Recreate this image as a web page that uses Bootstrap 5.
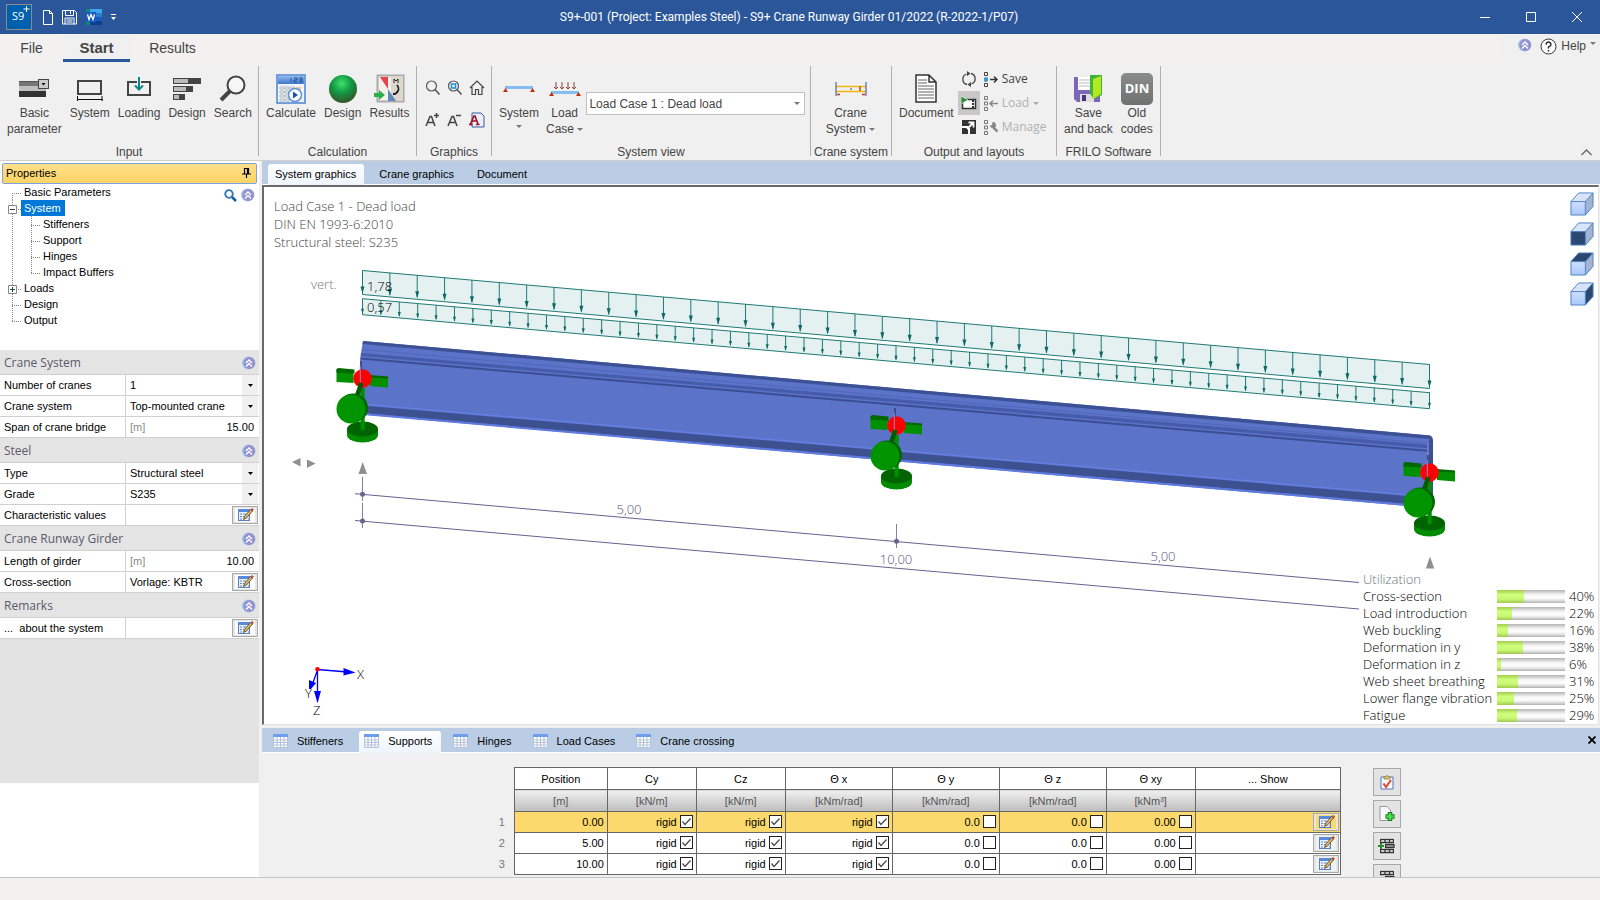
<!DOCTYPE html>
<html lang="en">
<head>
<meta charset="utf-8">
<meta name="viewport" content="width=device-width, initial-scale=1">
<title>S9+ Crane Runway Girder</title>
<link href="https://cdn.jsdelivr.net/npm/bootstrap@5.3.0/dist/css/bootstrap.min.css" rel="stylesheet">
<style>
:root{--strip:#bbcde5;--face:#f0f0f0;--line:#d0d0d0}
body{font:11px/16px "Liberation Sans",Arial,sans-serif;color:#000;background:var(--face)}
button,input,select{font:inherit;color:inherit}
button{background:none;border:0;padding:0}
svg{display:block;flex:none}
.seg{font-family:"Open Sans","Noto Sans",sans-serif}
.titlebar{height:34px;background:#2b579a;color:#fff;font-size:12px}
.wintitle{font-family:Roboto,"Open Sans",sans-serif;padding-bottom:1px}
.winbtn{width:46px;height:34px}
.menurow{height:28px;background:#f3f1f0;font-size:14px;color:#444}
.menurow a{color:#444;text-decoration:none;line-height:28px;height:28px;text-align:center;border-bottom:3px solid transparent}
.m-file{width:63px}.m-start{width:67px;font-weight:bold;font-size:15px;background:var(--face);border-bottom-color:#2b579a!important}.m-res{width:85px}
.helpbox{font-size:12px;background:var(--face);height:28px}
.ribbon{height:99px;border-bottom:1px solid #d0cfcc;font-size:12px;color:#444}
.rgroup{border-right:1px solid #b0b0b0;margin:4px 0;height:90px;padding-left:3px}
.rgroup .gname{line-height:20px;height:14px;text-align:center;margin-left:-3px}
.g1{width:259px}.g2{width:158px}.g3{width:75px}.g4{width:319px}.g5{width:81px}.g6{width:165px}.g7{width:104px}
.rbtn{padding:0 4px;text-align:center;line-height:16px;white-space:nowrap}
.g4 .rbtn{padding:0 3px 0 4px}
.rbtn .ic{height:33px;margin-top:6px;display:flex;align-items:center;justify-content:center}
.tool3{display:grid;grid-template-columns:22px 22px 22px;grid-template-rows:32px 32px;place-items:center;margin:6px 0 0 2px;width:66px}
.tool3 button{width:20px;height:20px}
.combo{width:219px;height:23px;margin-top:26px;border:1px solid #c0c0c0;background:#fff url("data:image/svg+xml,%3Csvg xmlns='http://www.w3.org/2000/svg' width='6' height='3'%3E%3Cpath d='M0 0h6l-3 3z' fill='%23777'/%3E%3C/svg%3E") no-repeat right 4px center;appearance:none;border-radius:0;padding:0 2px}
.lay,.lay1{margin-top:1px}
.lay button{height:24px;gap:4px}
.lay .off{color:#b0b0b0}
.lay1 button{width:22px;height:24px;display:flex;align-items:center;justify-content:center}
.lay1 .on{background:#c9c8c6}
.left{width:262px}
.left-in{width:259px;background:#fff}
.ptitle{margin:2px 0 0 2px;height:21px;width:255px;border:1px solid #7ba4de;background:linear-gradient(#ffe08a,#fdd466);border-radius:2px;padding:0 5px 2px 3px}
.treebox{height:166px}
.trow{height:16px;padding-left:12px;display:flex}
.trow a{color:#000;text-decoration:none;padding:0 3px}
.trow a.sel{background:#0078d7;color:#fff;padding-right:4px}
.tw{width:9px;height:16px;display:block;--d:repeating-linear-gradient(#888 0 1px,transparent 1px 2px);--h:repeating-linear-gradient(90deg,#888 0 1px,transparent 1px 2px);background:var(--d) 0 0/1px 100% no-repeat,var(--h) 0 9px/100% 1px no-repeat}
.tw.pass{width:19px;background:var(--d) 0 0/1px 100% no-repeat}
.tw.first{background:var(--d) 0 9px/1px 100% no-repeat,var(--h) 0 9px/100% 1px no-repeat}
.tw.end{background:var(--d) 0 0/1px 9px no-repeat,var(--h) 0 9px/100% 1px no-repeat}
.tw svg{margin:5px 0 0 -4px}
.phead{height:25px;background:#e4e4e4;border-bottom:1px solid var(--line);color:#5a5a6a;padding:2px 3px 0 4px;font-size:12px}
.prow{height:21px;border-bottom:1px solid var(--line);background:#fff}
.prow label{width:126px;padding:2px 4px;line-height:16px;border-right:1px solid var(--line);white-space:nowrap}
.prow select,.prow input{border:0;background:transparent;appearance:none;border-radius:0;min-width:0;flex:1;outline:0;height:20px;padding:0 4px}
.prow select{background:url("data:image/svg+xml,%3Csvg xmlns='http://www.w3.org/2000/svg' width='17' height='20'%3E%3Crect width='16' height='20' fill='%23f0f0f0'/%3E%3Cpath d='M6 9h5l-2.500 3z'/%3E%3C/svg%3E") right top no-repeat}
.prow input.num{text-align:right;padding-right:5px}
.unit{color:#8a8a8a;padding:2px 0 0 4px}
.edit{width:26px;height:18px;border:1px solid #a8a8a8;background:#e6e6e6;display:inline-flex;align-items:center;justify-content:center;margin:1px 1px 0 0;flex:none}
.edit svg{background:#fff}
.pfill{background:#e3e3e3}
.pfoot{height:94px}
.strip{height:24px;background:var(--strip);border-bottom:1px solid #fff;padding:3px 0 0 6px}
.strip a{color:#000;text-decoration:none;padding:0 8px 0 7px;line-height:20px;white-space:nowrap;border-radius:3px 3px 0 0;height:22px}
.strip a.cur{background:linear-gradient(#fdfeff,#eef5fd)}
.bstrip{height:25px}
.bstrip a{padding:0 9px 2px 5px;display:flex;align-items:center;gap:9px;height:22px;margin-right:7px}
.view{background:#fff;border:1px solid #e2e2e2;border-top:2px solid #696969;border-left:2px solid #696969;margin:0 1px 3px 0;overflow:hidden}
.scene{width:100%;height:100%}
.scene text{font-family:"Open Sans","Noto Sans",sans-serif;font-size:13px;font-weight:300}
.info{left:10px;top:10px;line-height:18px;font-size:13px;color:#444;font-weight:300}
.cubes{right:4px;top:5px;gap:6px}
.util{right:0;bottom:0;background:#fff;font-size:13px;font-weight:300;line-height:17px;width:239px;padding-left:4px}
.util .ur{display:grid;grid-template-columns:134px 68px 29px;column-gap:0;height:17px;align-items:center;white-space:nowrap;color:#000}
.util .uv{padding-left:4px}
.bar3{height:13px;background:linear-gradient(#b4b4b4,#f4f4f4 35%,#fff 60%,#e0e0e0 80%,#b0b0b0)}
.bar3 div{height:13px;background:linear-gradient(#a2cc4e,#ceff7c 35%,#c8f873 70%,#9fc850)}
.bottom{height:149px}
.bbody{overflow:hidden;padding-top:14px}
.grid3{border-collapse:collapse;table-layout:fixed;width:879px}
.grid3 th,.grid3 td{border:1px solid #666;padding:0 3px;font-weight:normal;text-align:right;line-height:16px;background:#fff}
.grid3 thead th{text-align:center;height:22px}
.grid3 tbody tr{height:21px}
.grid3 .unitrow th{background:linear-gradient(#f0f0f0,#bdbdbd);color:#555}
.grid3 .rn,.grid3 thead th.rn{border:0;border-right:1px solid #666;background:transparent;color:#777;padding-right:9px}
.grid3 .hot td{background:#fbd96c}
.grid3 .hot .edit svg{background:#fbd96c}
.grid3 .edit svg{background:#f0f0f0}
.grid3 td.sh{padding:0 1px}
.grid3 .edit{margin:0;vertical-align:top}
.cell{display:flex;justify-content:flex-end;align-items:center;gap:3px}
.cell input{appearance:none;width:13px;height:13px;border:1px solid #222;background:#fff;margin:0 0 2px}
.cell input:checked{background:#fff url("data:image/svg+xml,%3Csvg xmlns='http://www.w3.org/2000/svg' width='11' height='11'%3E%3Cpath d='M1.500 5.500l2.500 3L9.500 2.500' fill='none' stroke='%23444' stroke-width='1.200'/%3E%3C/svg%3E")}
.sidebtns{margin-left:32px;gap:4px;padding-top:1px}
.sidebtns button{width:28px;height:28px;border:1px solid #a8a8a8;background:#e3e3e3;display:flex;align-items:center;justify-content:center;flex:none}
.status{height:23px;background:#f3f1f0;border-top:1px solid #c6c6c6}
</style>
</head>
<body class="vh-100 overflow-hidden d-flex flex-column">
<svg width="0" height="0" class="position-absolute" aria-hidden="true">
<defs>
<radialGradient id="ball" cx=".45" cy=".3" r=".75"><stop offset="0" stop-color="#3fe06a"/><stop offset=".45" stop-color="#129a45"/><stop offset="1" stop-color="#3b4a25"/></radialGradient>
<linearGradient id="calb" x2="0" y2="1"><stop offset="0" stop-color="#8fb8ee"/><stop offset="1" stop-color="#3f78cc"/></linearGradient>
<linearGradient id="cf" x2="0" y2="1"><stop offset="0" stop-color="#cfe0ff"/><stop offset="1" stop-color="#a9c8ff"/></linearGradient>
<linearGradient id="din" x2="0" y2="1"><stop offset="0" stop-color="#8a8b8b"/><stop offset="1" stop-color="#6f7070"/></linearGradient>
</defs>
<symbol id="chev" viewBox="0 0 14 14"><circle cx="6.500" cy="7" r="6.500" fill="#9ccbe8"/><circle cx="7.300" cy="7" r="6" fill="#9593cf"/><path d="M4 7L7 4l3 3M4 10.500l3-3 3 3" fill="none" stroke="#fff" stroke-width="1.300"/></symbol>
<symbol id="edt" viewBox="0 0 20 14"><rect x="3.500" y="1.500" width="11" height="11" fill="#e8f0fc" stroke="#5b7fc0"/><rect x="3" y="1" width="12" height="3" fill="#5a8ae0"/><path d="M5 6h2M5 8.500h2M5 11h2M8 6h3M8 8.500h2M13 11h2" stroke="#6d86b5"/><path d="M8.500 11.500L9.500 8.500l6-7 2 1.500-6 7z" fill="#e0b860" stroke="#4a3a20" stroke-width=".8"/><path d="M15.500 1.500L17 0l2 1.500-1.500 2z" fill="#b05040"/></symbol>
<symbol id="tbl" viewBox="0 0 15 14"><path d="M.5.5h14v13H.5z" fill="#fff" stroke="#b4c2dc"/><path d="M0 0h15v3H0z" fill="#6f9ded"/><path d="M1 6h13M1 8.500h13M1 11h13M4 3v10M7.500 3v10M11 3v10" stroke="#a3b4d2" stroke-width=".8"/></symbol>
<symbol id="lens" viewBox="0 0 16 16"><circle cx="6.500" cy="6" r="5" fill="none" stroke="#555" stroke-width="1.200"/><path d="M10 9.500l4.500 5" stroke="#555" stroke-width="1.600"/></symbol>
<symbol id="cubeb" viewBox="0 0 25 25"><path d="M1 10l8-9h15v14l-8 9H1z" fill="#d8e4fb"/><path d="M16 10l8-9v14l-8 9z" fill="#a5b2d2"/><path d="M1 10h15v14H1z" fill="url(#cf)"/></symbol>
<symbol id="cubel" viewBox="0 0 25 25"><path d="M1 10l8-9h15v14l-8 9H1zM1 10h15v14M16 10l8-9" fill="none" stroke="#4c82c0"/></symbol>
<symbol id="boxes" viewBox="0 0 5 16"><path d="M.5.5h3v3h-3zM.5 6h3v3h-3zM.5 11.500h3v3h-3z" fill="none" stroke="currentColor"/></symbol>
<symbol id="car" viewBox="0 0 6 3"><path d="M0 0h6L3 3z" fill="#777"/></symbol>
<symbol id="rows3" viewBox="0 0 18 16"><path d="M1 0h16v5H1zM6 5h11v5H6zM1 10h16v5H1z" fill="#fff"/><path d="M2.500 1.500h13v3h-13zM7 1.500v3M11.500 1.500v3M2.500 11.500h13v3h-13zM7 11.500v3M11.500 11.500v3" fill="none" stroke="#333" stroke-width="1.300"/><path d="M7.500 6.500h8.500v3H7.500z" fill="#aaa" stroke="#333" stroke-width="1.300"/></symbol>
</svg>

<header class="titlebar d-flex align-items-center flex-none">
  <svg class="ms-1" width="30" height="30" viewBox="0 0 30 30"><rect x="2.500" y="2.500" width="25" height="25" fill="#0060b0" stroke="#8b8b8b"/><text x="8" y="18" font-size="11" fill="#fff" text-anchor="start" font-family="Open Sans">S9</text><path d="M22.500 4v6M19.500 7h6" stroke="#fff"/></svg>
  <button class="ms-2" aria-label="New"><svg width="12" height="15" viewBox="0 0 12 15"><path d="M1.500.5h6l3 3v11h-9zM7.500.5v3h3" fill="none" stroke="#fff"/></svg></button>
  <button class="ms-2" aria-label="Save"><svg width="16" height="15" viewBox="0 0 16 15"><path d="M.5.5h12l2 2v11.500H.5zM3.500.5v5h8v-5M8.500 1v3M3 14V8h9v6M4.500 10h6M4.500 12h6" fill="none" stroke="#fff"/></svg></button>
  <button class="ms-2" aria-label="Word"><svg width="17" height="16" viewBox="0 0 17 16"><path d="M4 0h12v4H4z" fill="#41a5ee"/><path d="M4 4h12v4H4z" fill="#2b7cd3"/><path d="M4 8h12v4H4z" fill="#185abd"/><path d="M4 12h12v4H4z" fill="#103f91"/><path d="M0 0h4v3H0zM0 13h4v3H0z" fill="#0a8a7a"/><rect y="3" width="10" height="10" fill="#185abd"/><path d="M1.500 5.500l1.500 5 2-5 2 5 1.500-5" fill="none" stroke="#fff" stroke-width="1.300"/></svg></button>
  <button class="ms-2" aria-label="More"><svg width="5" height="7" viewBox="0 0 5 7"><path d="M0 .5h5" stroke="#fff"/><path d="M0 3h5L2.500 6z" fill="#fff"/></svg></button>
  <div class="wintitle flex-grow-1 text-center">S9+-001 (Project: Examples Steel) - S9+ Crane Runway Girder 01/2022 (R-2022-1/P07)</div>
  <button class="winbtn" aria-label="Minimize"><svg class="m-auto" width="10" height="10"><path d="M0 5.500h10" stroke="#fff"/></svg></button>
  <button class="winbtn" aria-label="Maximize"><svg class="m-auto" width="10" height="10"><path d="M.5.5h9v9h-9z" fill="none" stroke="#fff"/></svg></button>
  <button class="winbtn" aria-label="Close"><svg class="m-auto" width="10" height="10"><path d="M0 0l10 10M10 0L0 10" stroke="#fff"/></svg></button>
</header>

<nav class="menurow d-flex">
  <a class="m-file" href="#">File</a><a class="m-start" href="#">Start</a><a class="m-res" href="#">Results</a>
  <div class="helpbox ms-auto ps-3 pe-1 d-flex align-items-start pt-1 gap-1">
    <svg class="me-1" width="14" height="14"><use href="#chev"/></svg>
    <svg width="17" height="17" viewBox="0 0 17 17"><circle cx="8.500" cy="8.500" r="7.500" fill="#fff" stroke="#333"/><path d="M6 6.500q.5-2.500 2.500-2.500T11 6.500Q11 8 8.500 9v1.500" fill="none" stroke="#333" stroke-width="1.500"/><path d="M7.700 12h1.600v1.600H7.700z" fill="#333"/></svg>
    <button>Help</button><svg class="mt-1" width="6" height="3"><use href="#car"/></svg>
  </div>
</nav>

<section class="ribbon d-flex">
  <div class="rgroup g1 d-flex flex-column"><div class="d-flex flex-grow-1 align-items-start">
    <button class="rbtn"><span class="ic"><svg width="31" height="22" viewBox="0 0 31 22"><path d="M0 3h20v5H0z" fill="#555"/><path d="M0 8h27v5H0z" fill="#c0c0c0"/><path d="M0 13h27v6H0z" fill="#333"/><path d="M0 4h27v4H0z" fill="#777"/><rect x="19.500" y="1.500" width="10" height="9" fill="#ccc" stroke="#444"/><path d="M22.500 5h4l-2 2.500z"/></svg></span>Basic<br>parameter</button>
    <button class="rbtn"><span class="ic"><svg width="28" height="24" viewBox="0 0 28 24"><path d="M2 4h23v13H2z" fill="none" stroke="#444" stroke-width="2"/><path d="M1 22.500h26M1.500 19v5M26 19v5" stroke="#111"/></svg></span>System</button>
    <button class="rbtn"><span class="ic"><svg width="26" height="24" viewBox="0 0 26 24"><path d="M2 5h22v13H2z" fill="none" stroke="#444" stroke-width="2"/><path d="M13 0v12M9 8.500l4 4 4-4" fill="none" stroke="#f0f0f0" stroke-width="4"/><path d="M13 0v13M9 8.500l4 4 4-4" fill="none" stroke="#0e8585" stroke-width="2"/></svg></span>Loading</button>
    <button class="rbtn"><span class="ic"><svg width="30" height="24" viewBox="0 0 30 24"><path d="M1 1h28v6H1zM1 9h20v6H1zM1 17h12v6H1z" fill="#444"/><path d="M2 2h14v4H2zM2 10h12v4H2zM2 18h5v4H2z" fill="#bbb"/></svg></span>Design</button>
    <button class="rbtn"><span class="ic"><svg width="27" height="27" viewBox="0 0 27 27"><circle cx="17" cy="10" r="8.500" fill="#f6f6f6" stroke="#444" stroke-width="2"/><path d="M11 16l-9 9" stroke="#444" stroke-width="4"/></svg></span>Search</button>
  </div><div class="gname">Input</div></div>
  <div class="rgroup g2 d-flex flex-column"><div class="d-flex flex-grow-1 align-items-start">
    <button class="rbtn"><span class="ic"><svg width="30" height="30" viewBox="0 0 30 30"><rect x="1" y="1" width="28" height="28" fill="#eef3fb" stroke="#4a82d0" stroke-width="1.500"/><rect x="2" y="2" width="26" height="8" fill="url(#calb)"/><path d="M15 4v4M18 4h3v2h-3v2h3M23 4h3v4h-3M23 6h3" fill="none" stroke="#234e9b"/><path d="M4 13h4v2H4zM9 13h4v2H9zM14 13h4v2h-4zM4 17h4v2H4zM9 17h4v2H9zM4 21h4v2H4zM9 21h4v2H9zM4 25h4v2H4zM9 25h4v2H9z" fill="#fff" stroke="#9aa" stroke-width=".8"/><path d="M20 13h5v3h-5z" fill="#f2c38a"/><circle cx="19" cy="21" r="6.500" fill="#fff" stroke="#5d92d8" stroke-width="1.500"/><path d="M17 17.500l5 3.500-5 3.500z" fill="#1a50a8"/></svg></span>Calculate</button>
    <button class="rbtn"><span class="ic"><svg width="30" height="30"><circle cx="15" cy="15" r="14" fill="url(#ball)"/></svg></span>Design</button>
    <button class="rbtn"><span class="ic"><svg width="31" height="29" viewBox="0 0 31 29"><rect x="3.500" y="1.500" width="26" height="26" fill="#f4f1ea" stroke="#aaa" stroke-width="2"/><path d="M17 2h12v25H17z" fill="#ddd8cc"/><path d="M6 3h8v12z" fill="#e8434a"/><path d="M14 15v12h8z" fill="#5e88b8"/><path d="M20 9V5l2 2 2-2v4" fill="none" stroke="#222"/><path d="M23 11q4 5-2 9h-2" fill="none" stroke="#222" stroke-width="1.800"/><path d="M0 19h5v-3l6 5-6 5v-3H0z" fill="#2cb04a"/></svg></span>Results</button>
  </div><div class="gname">Calculation</div></div>
  <div class="rgroup g3 d-flex flex-column"><div class="tool3 flex-grow-1">
    <button aria-label="Zoom"><svg class="m-auto" width="16" height="16"><use href="#lens"/></svg></button>
    <button aria-label="Zoom window"><svg class="m-auto" width="16" height="16" viewBox="0 0 16 16"><use href="#lens"/><rect x="4.500" y="4" width="4" height="4" fill="none" stroke="#1c8fd6" stroke-width="1.500"/></svg></button>
    <button aria-label="Home"><svg class="m-auto" width="16" height="16" viewBox="0 0 16 16"><path d="M1 8l7-7 7 7M3 7v7.500h3.500V9.500h3v5H13V7" fill="none" stroke="#444" stroke-width="1.200"/></svg></button>
    <button aria-label="Larger text"><svg class="m-auto" width="16" height="16" viewBox="0 0 16 16"><path d="M1 14L5 4.500h1.500L10 14M2.500 10.500h6M11.500 1v5M9 3.500h5" fill="none" stroke="#444" stroke-width="1.500"/></svg></button>
    <button aria-label="Smaller text"><svg class="m-auto" width="16" height="16" viewBox="0 0 16 16"><path d="M1 14L5 4.500h1.500L10 14M2.500 10.500h6M9 3.500h5" fill="none" stroke="#444" stroke-width="1.500"/></svg></button>
    <button aria-label="Font"><svg class="m-auto" width="16" height="16" viewBox="0 0 16 16"><path d="M3 1h9l3 3v11H3z" fill="#e8eefa" stroke="#3a5a9a"/><path d="M1.500 12L5 4h1l3 8M3 9h4.500M0 12.500h3.500M7 12.500h3.500" fill="none" stroke="#a01020" stroke-width="1.600"/></svg></button>
  </div><div class="gname">Graphics</div></div>
  <div class="rgroup g4 d-flex flex-column"><div class="d-flex flex-grow-1 align-items-start">
    <button class="rbtn"><span class="ic"><svg width="32" height="12" viewBox="0 0 32 12"><path d="M2 4.500h28" stroke="#86bdf0" stroke-width="3"/><path d="M0 9l2.500-4L5 9zM27 9l2.500-4L32 9z" fill="#c03010"/></svg></span>System<br><svg class="mx-auto mt-1" width="6" height="3"><use href="#car"/></svg></button>
    <button class="rbtn"><span class="ic"><svg width="32" height="18" viewBox="0 0 32 18"><path d="M2 12.500h28" stroke="#86bdf0" stroke-width="3"/><path d="M0 16l2.500-4L5 16zM27 16l2.500-4L32 16z" fill="#c03010"/><path d="M7 2v7M13 2v7M19 2v7M25 2v7M5 7l2 2 2-2M11 7l2 2 2-2M17 7l2 2 2-2M23 7l2 2 2-2" fill="none" stroke="#8c4040"/></svg></span>Load<br>Case <svg class="d-inline align-middle" width="6" height="3"><use href="#car"/></svg></button>
    <select class="combo align-self-start" aria-label="Load case"><option>Load Case 1 : Dead load</option></select>
  </div><div class="gname">System view</div></div>
  <div class="rgroup g5 d-flex flex-column"><div class="d-flex flex-grow-1 align-items-start justify-content-center">
    <button class="rbtn pe-2"><span class="ic"><svg width="32" height="16" viewBox="0 0 32 16"><path d="M1 5.500h30M1 10.500h30" stroke="#f2b60e" stroke-width="1.500"/><path d="M25 5v5" stroke="#d07820" stroke-width="2"/><path d="M1 1v14M31 1v14" stroke="#2a50a0"/><path d="M2 13.500h3M27 13.500h3" stroke="#d03020" stroke-width="1.500"/><path d="M15 8h2" stroke="#444"/></svg></span>Crane<br>System <svg class="d-inline align-middle" width="6" height="3"><use href="#car"/></svg></button>
  </div><div class="gname">Crane system</div></div>
  <div class="rgroup g6 d-flex flex-column"><div class="d-flex flex-grow-1 align-items-start">
    <button class="rbtn"><span class="ic"><svg width="22" height="29" viewBox="0 0 22 29"><path d="M1 1h13l7 7v20H1zM14 1v7h7" fill="#fff" stroke="#333" stroke-width="1.500"/><path d="M3 6h9M3 9h9M3 12h16M3 15h16M3 18h16M3 21h16M3 24h16" stroke="#666" stroke-width="1.200"/></svg></span>Document</button>
    <div class="lay1 d-flex flex-column">
      <button aria-label="Refresh"><svg width="14" height="16" viewBox="0 0 14 16"><path d="M4.500 3A5.500 5.500 0 0 0 5 13.500M9.500 13A5.500 5.500 0 0 0 9 2.500" fill="none" stroke="#444" stroke-width="1.300"/><path d="M5 0l3.500 2.500L5 5zM9 11l-3.500 2.500L9 16z" fill="#444"/></svg></button>
      <button class="on" aria-label="Preview"><svg width="16" height="14" viewBox="0 0 16 14"><rect x="1.500" y="3.500" width="13" height="9" fill="#fff" stroke="#333" stroke-width="1.500"/><path d="M12 4v8" stroke="#333" stroke-dasharray="2 1" stroke-width="2"/><path d="M0 0l7 4L0 8z" fill="#2e8b3a" stroke="#fff" stroke-width=".6"/></svg></button>
      <button aria-label="Expand"><svg width="14" height="14" viewBox="0 0 14 14"><path d="M0 0h14v14H0z" fill="#333"/><path d="M0 6h6v2H0zM6 8h2v6H6z" fill="#fff"/><path d="M5 9l6-6M6.500 2.500h5v5" fill="none" stroke="#fff" stroke-width="1.800"/></svg></button>
    </div>
    <div class="lay seg d-flex flex-column ms-1">
      <button class="d-flex align-items-center"><svg width="14" height="15" viewBox="0 0 14 15"><svg width="5" height="16"><use href="#boxes"/></svg><path d="M0 6h4v3H0z" fill="#2a9be0"/><path d="M6 7.500h7M10 4.500l3 3-3 3" fill="none" stroke="#333" stroke-width="1.500"/></svg>Save</button>
      <button class="off d-flex align-items-center"><svg width="14" height="15" viewBox="0 0 14 15"><svg width="5" height="16" color="#777"><use href="#boxes"/></svg><path d="M6 7.500h8M9 4.500l-3 3 3 3" fill="none" stroke="#888" stroke-width="1.500"/></svg>Load <svg opacity=".6" width="6" height="3"><use href="#car"/></svg></button>
      <button class="off d-flex align-items-center"><svg width="14" height="15" viewBox="0 0 14 15"><svg width="5" height="16" color="#777"><use href="#boxes"/></svg><path d="M8 6l5.500 5.500" stroke="#888" stroke-width="2.500"/><path d="M8.500 2A3 3 0 1 1 6 5l2 .5z" fill="#888"/></svg>Manage</button>
    </div>
  </div><div class="gname">Output and layouts</div></div>
  <div class="rgroup g7 d-flex flex-column"><div class="d-flex flex-grow-1 align-items-start">
    <button class="rbtn"><span class="ic"><svg width="30" height="30" viewBox="0 0 30 30"><path d="M1 3h26v25H4l-3-3z" fill="#7c66b8"/><path d="M5 3h15v13H5z" fill="#fff"/><path d="M6 6h12M6 9h12M6 12h12" stroke="#bbb"/><path d="M7 20h14v8H7z" fill="#ddd"/><path d="M9 21h4v6H9z" fill="#45397a"/><path d="M17 1h12v20l-8 4-4-5z" fill="#3fb43c"/><path d="M20 5l8-3v18l-8 5z" fill="#b4e820"/></svg></span>Save<br>and back</button>
    <button class="rbtn ps-1"><span class="ic"><svg width="32" height="32" viewBox="0 0 32 32"><rect width="32" height="32" rx="5" fill="url(#din)"/><text x="16" y="20" text-anchor="middle" font-family="Open Sans" font-weight="bold" font-size="13" fill="#fff">DIN</text></svg></span>Old<br>codes</button>
  </div><div class="gname">FRILO Software</div></div>
  <button class="ms-auto align-self-end me-2 mb-1" aria-label="Collapse ribbon"><svg width="11" height="7" viewBox="0 0 11 7"><path d="M.5 6l5-5 5 5" fill="none" stroke="#666" stroke-width="1.300"/></svg></button>
</section>

<main class="d-flex flex-grow-1 overflow-hidden">
  <aside class="left flex-shrink-0 d-flex">
   <div class="left-in d-flex flex-column">
    <div class="ptitle d-flex justify-content-between align-items-center"><span>Properties</span><svg width="9" height="10" viewBox="0 0 9 10"><path d="M2.500 6V.5h4V6M5.500 0v6M0 6h9M4.500 6v4" fill="none" stroke="#000" stroke-width="1.200"/></svg></div>
    <div class="treebox position-relative">
      <div class="position-absolute end-0 top-0 me-1 mt-1 d-flex gap-1 align-items-center"><svg width="13" height="13" viewBox="0 0 13 13"><circle cx="5" cy="5" r="3.800" fill="none" stroke="#2e75b6" stroke-width="1.800"/><path d="M8 8l4 4" stroke="#1e5a96" stroke-width="2.500"/></svg><svg width="14" height="14"><use href="#chev"/></svg></div>
      <div class="trow"><i class="tw first"></i><a href="#">Basic Parameters</a></div>
      <div class="trow"><i class="tw"><svg width="9" height="9"><path d="M.5.5h8v8h-8z" fill="#fff" stroke="#888"/><path d="M2 4.500h5" stroke="#245"/></svg></i><a class="sel" href="#">System</a></div>
      <div class="trow"><i class="tw pass"></i><i class="tw"></i><a href="#">Stiffeners</a></div>
      <div class="trow"><i class="tw pass"></i><i class="tw"></i><a href="#">Support</a></div>
      <div class="trow"><i class="tw pass"></i><i class="tw"></i><a href="#">Hinges</a></div>
      <div class="trow"><i class="tw pass"></i><i class="tw end"></i><a href="#">Impact Buffers</a></div>
      <div class="trow"><i class="tw"><svg width="9" height="9"><path d="M.5.5h8v8h-8z" fill="#fff" stroke="#888"/><path d="M2 4.500h5M4.500 2v5" stroke="#245"/></svg></i><a href="#">Loads</a></div>
      <div class="trow"><i class="tw"></i><a href="#">Design</a></div>
      <div class="trow"><i class="tw end"></i><a href="#">Output</a></div>
    </div>
    <div class="pfill flex-grow-1">
      <div class="phead seg d-flex justify-content-between align-items-center">Crane System<svg width="14" height="14"><use href="#chev"/></svg></div>
      <div class="prow d-flex"><label for="p1">Number of cranes</label><select id="p1"><option>1</option></select></div>
      <div class="prow d-flex"><label for="p2">Crane system</label><select id="p2"><option>Top-mounted crane</option></select></div>
      <div class="prow d-flex"><label for="p3">Span of crane bridge</label><span class="unit">[m]</span><input class="num" id="p3" value="15.00"></div>
      <div class="phead seg d-flex justify-content-between align-items-center">Steel<svg width="14" height="14"><use href="#chev"/></svg></div>
      <div class="prow d-flex"><label for="p4">Type</label><select id="p4"><option>Structural steel</option></select></div>
      <div class="prow d-flex"><label for="p5">Grade</label><select id="p5"><option>S235</option></select></div>
      <div class="prow d-flex"><label for="p6">Characteristic values</label><input id="p6"><button class="edit" aria-label="Edit"><svg width="20" height="14"><use href="#edt"/></svg></button></div>
      <div class="phead seg d-flex justify-content-between align-items-center">Crane Runway Girder<svg width="14" height="14"><use href="#chev"/></svg></div>
      <div class="prow d-flex"><label for="p7">Length of girder</label><span class="unit">[m]</span><input class="num" id="p7" value="10.00"></div>
      <div class="prow d-flex"><label for="p8">Cross-section</label><input id="p8" value="Vorlage: KBTR"><button class="edit" aria-label="Edit"><svg width="20" height="14"><use href="#edt"/></svg></button></div>
      <div class="phead seg d-flex justify-content-between align-items-center">Remarks<svg width="14" height="14"><use href="#chev"/></svg></div>
      <div class="prow d-flex"><label for="p9">...&nbsp; about the system</label><input id="p9"><button class="edit" aria-label="Edit"><svg width="20" height="14"><use href="#edt"/></svg></button></div>
    </div>
    <div class="pfoot"></div>
   </div>
  </aside>

  <section class="flex-grow-1 d-flex flex-column overflow-hidden">
    <nav class="strip d-flex gap-2"><a class="cur" href="#">System graphics</a><a href="#">Crane graphics</a><a href="#">Document</a></nav>
    <div class="view flex-grow-1 position-relative">
      <svg class="scene" viewBox="264 187 1334 534" preserveAspectRatio="xMinYMin meet" role="img" aria-label="Girder on three supports">
        <g id="loads" stroke="#1f7a76" fill="#e4f1f0"></g>
        <g>
          <path d="M363 341L1430 435.500V508L362 414.500L360 359z" fill="#5b73c9"/>
          <path d="M363 341L1430 435.500V439L362.500 344z" fill="#3c5094"/>
          <path d="M362 349L1430 443v1L362 350z" fill="#5068b8"/>
          <path d="M361 353L1430 445v3.500L361 356z" fill="#465caa"/>
          <path d="M361 357.500L1430 450v2L361 359.500z" fill="#3b4e91"/>
          <path d="M363 403.500L1430 496v1.500L363 405z" fill="#647fe2"/>
          <path d="M363 405.500L1430 498v8L363 413z" fill="#3d508f"/>
          <path d="M363 413L1430 506v2L363 415z" fill="#5f7ae0"/>
          <path d="M1430 435.500q3 1 3 5V507h-4V442z" fill="#3d508f"/>
          <path d="M1428 443v64" stroke="#7f93dd"/>
        </g>
        <defs><g id="sup">
          <path d="M336.500 369l17 1v13l-17-1z" fill="#009000"/><path d="M336.500 369l2-1 16 1.500v4l-18-1z" fill="#006800"/>
          <path d="M370 376l18 1v10.500l-18-1.500z" fill="#009000"/><path d="M370 375l18 1.500v2l-18-1z" fill="#006800"/>
          <path d="M361 361v48" stroke="#34406f" stroke-width="1.500"/>
          <circle cx="362.500" cy="378.500" r="9.300" fill="#f00"/><path d="M360.300 366v17" stroke="#8a8ad8"/>
          <path d="M347 429v6a15.500 7.500 0 0 0 31 0v-6z" fill="#008c00"/><ellipse cx="362.500" cy="429" rx="15.500" ry="7.500" fill="#006400"/>
          <path d="M362.700 388v42" stroke="#009000" stroke-width="4"/>
          <path d="M361.500 383l-5 14" stroke="#005c00" stroke-width="4.500"/>
          <ellipse cx="353" cy="408" rx="15" ry="14.500" fill="#006400"/><circle cx="351" cy="409" r="14.500" fill="#009400"/>
        </g></defs>
        <use href="#sup"/><use href="#sup" x="534" y="47"/><use href="#sup" x="1067" y="94"/>
        <g fill="#8f8f8f"><path d="M362.700 462l4.300 12h-8.500zM1430 556.500l4.300 12h-8.500zM292 462l8.500-4v8.500zM315.500 463.500l-8.500-4v8.500z"/></g>
        <g stroke="#5c5482" fill="none"><path d="M355 493.700L1359 582.500M355 520.500L1359 609" stroke="#6a6090"/><path d="M362.500 477v24M362.500 503v25M896.500 524v24" stroke="#8480a8"/></g>
        <g fill="#6a6490"><circle cx="362.500" cy="494.300" r="2.500"/><circle cx="362.500" cy="521" r="2.500"/><circle cx="896.500" cy="541.300" r="2.500"/></g>
        <g fill="#55557c" text-anchor="middle"><text x="629" y="514">5,00</text><text x="1163" y="561">5,00</text><text x="896" y="564">10,00</text></g>
        <text x="311" y="289" fill="#777">vert.</text><text x="367" y="291">1,78</text><text x="367" y="312">0,57</text>
        <path d="M317.500 670v32M317.500 669.500l30 2.500M317.500 670l-5 14" stroke="#00f" stroke-width="1.300"/>
        <path d="M343.500 668l12 4.500-12 3zM314 691h7l-3.500 12zM309 680l7 3-5 6h-2z" fill="#00f"/><circle cx="317.500" cy="669.300" r="2.300" fill="#f00"/>
        <g fill="#000"><text x="357" y="679">X</text><text x="305" y="698">Y</text><text x="313" y="715">Z</text></g>
      </svg>
      <div class="info seg position-absolute">Load Case 1 - Dead load<br>DIN EN 1993-6:2010<br>Structural steel: S235</div>
      <div class="cubes position-absolute d-flex flex-column">
        <svg width="24" height="24" viewBox="0 0 25 25"><use href="#cubeb"/><use href="#cubel"/></svg>
        <svg width="24" height="24" viewBox="0 0 25 25"><use href="#cubeb"/><path d="M1 10h15v14H1z" fill="#2c4870"/><use href="#cubel"/></svg>
        <svg width="24" height="24" viewBox="0 0 25 25"><use href="#cubeb"/><path d="M1 10l8-9h15l-8 9z" fill="#2c4870"/><use href="#cubel"/></svg>
        <svg width="24" height="24" viewBox="0 0 25 25"><use href="#cubeb"/><path d="M16 10l8-9v14l-8 9z" fill="#2c4870"/><use href="#cubel"/></svg>
      </div>
      <div class="util seg position-absolute">
        <div class="ur"><span class="text-secondary">Utilization</span></div>
        <div class="ur"><span>Cross-section</span><div class="bar3"><div style="width:40%"></div></div><span class="uv">40%</span></div>
        <div class="ur"><span>Load introduction</span><div class="bar3"><div style="width:22%"></div></div><span class="uv">22%</span></div>
        <div class="ur"><span>Web buckling</span><div class="bar3"><div style="width:16%"></div></div><span class="uv">16%</span></div>
        <div class="ur"><span>Deformation in y</span><div class="bar3"><div style="width:38%"></div></div><span class="uv">38%</span></div>
        <div class="ur"><span>Deformation in z</span><div class="bar3"><div style="width:6%"></div></div><span class="uv">6%</span></div>
        <div class="ur"><span>Web sheet breathing</span><div class="bar3"><div style="width:31%"></div></div><span class="uv">31%</span></div>
        <div class="ur"><span>Lower flange vibration</span><div class="bar3"><div style="width:25%"></div></div><span class="uv">25%</span></div>
        <div class="ur"><span>Fatigue</span><div class="bar3"><div style="width:29%"></div></div><span class="uv">29%</span></div>
      </div>
    </div>
    <div class="bottom flex-shrink-0 d-flex flex-column">
      <nav class="strip bstrip d-flex flex-shrink-0">
        <div class="d-flex flex-grow-1">
          <a href="#"><svg width="15" height="14"><use href="#tbl"/></svg>Stiffeners</a>
          <a class="cur" href="#"><svg width="15" height="14"><use href="#tbl"/></svg>Supports</a>
          <a href="#"><svg width="15" height="14"><use href="#tbl"/></svg>Hinges</a>
          <a href="#"><svg width="15" height="14"><use href="#tbl"/></svg>Load Cases</a>
          <a href="#"><svg width="15" height="14"><use href="#tbl"/></svg>Crane crossing</a>
        </div>
        <button class="me-1 pb-1" aria-label="Close panel"><svg width="8" height="8"><path d="M.5.5l7 7M7.500.5l-7 7" stroke="#000" stroke-width="1.800"/></svg></button>
      </nav>
      <div class="bbody flex-grow-1 d-flex justify-content-center align-items-start">
        <table class="grid3" id="sup-table">
          <colgroup><col width="53"><col width="93"><col width="89"><col width="89"><col width="107"><col width="107"><col width="107"><col width="89"><col width="145"></colgroup>
          <thead>
            <tr><th class="rn"></th><th>Position</th><th>Cy</th><th>Cz</th><th>Θ x</th><th>Θ y</th><th>Θ z</th><th>Θ xy</th><th>... Show</th></tr>
            <tr class="unitrow"><th class="rn"></th><th>[m]</th><th>[kN/m]</th><th>[kN/m]</th><th>[kNm/rad]</th><th>[kNm/rad]</th><th>[kNm/rad]</th><th>[kNm³]</th><th></th></tr>
          </thead>
          <tbody>
            <tr class="hot"><th class="rn">1</th><td>0.00</td><td><label class="cell">rigid<input type="checkbox" checked></label></td><td><label class="cell">rigid<input type="checkbox" checked></label></td><td><label class="cell">rigid<input type="checkbox" checked></label></td><td><label class="cell">0.0<input type="checkbox"></label></td><td><label class="cell">0.0<input type="checkbox"></label></td><td><label class="cell">0.00<input type="checkbox"></label></td><td class="sh"><button class="edit" aria-label="Edit"><svg width="20" height="14"><use href="#edt"/></svg></button></td></tr>
            <tr><th class="rn">2</th><td>5.00</td><td><label class="cell">rigid<input type="checkbox" checked></label></td><td><label class="cell">rigid<input type="checkbox" checked></label></td><td><label class="cell">rigid<input type="checkbox" checked></label></td><td><label class="cell">0.0<input type="checkbox"></label></td><td><label class="cell">0.0<input type="checkbox"></label></td><td><label class="cell">0.00<input type="checkbox"></label></td><td class="sh"><button class="edit" aria-label="Edit"><svg width="20" height="14"><use href="#edt"/></svg></button></td></tr>
            <tr><th class="rn">3</th><td>10.00</td><td><label class="cell">rigid<input type="checkbox" checked></label></td><td><label class="cell">rigid<input type="checkbox" checked></label></td><td><label class="cell">rigid<input type="checkbox" checked></label></td><td><label class="cell">0.0<input type="checkbox"></label></td><td><label class="cell">0.0<input type="checkbox"></label></td><td><label class="cell">0.00<input type="checkbox"></label></td><td class="sh"><button class="edit" aria-label="Edit"><svg width="20" height="14"><use href="#edt"/></svg></button></td></tr>
          </tbody>
        </table>
        <div class="sidebtns d-flex flex-column">
          <button aria-label="Check"><svg width="14" height="15" viewBox="0 0 14 15"><path d="M1 2h12v12H1z" fill="#f4f7fd" stroke="#5577bb"/><path d="M4 3V1.500h1.500Q7-.5 8.500 1.500H10V4H4z" fill="#d8c070" stroke="#98803a" stroke-width=".8"/><path d="M3.500 8.500L6 12l5-7" fill="none" stroke="#e2472a" stroke-width="2"/></svg></button>
          <button aria-label="Add page"><svg width="16" height="16" viewBox="0 0 16 16"><path d="M1 .5h7l3.500 3.500v10.500H1z" fill="#f8f8f8" stroke="#999"/><path d="M11 6v9M6.500 10.500h9" stroke="#167a1c" stroke-width="4.500"/><path d="M11 7v7M7.500 10.500h7" stroke="#4ae04a" stroke-width="2.500"/></svg></button>
          <button aria-label="Insert row"><svg width="18" height="16"><use href="#rows3"/><path d="M3 5v6M0 8h6" stroke="#2a8a2a" stroke-width="2"/></svg></button>
          <button aria-label="Delete row"><svg width="18" height="16"><use href="#rows3"/><path d="M0 8h6" stroke="#c02020" stroke-width="2"/></svg></button>
        </div>
      </div>
    </div>
  </section>
</main>
<footer class="status flex-shrink-0"></footer>
<script src="https://cdn.jsdelivr.net/npm/bootstrap@5.3.0/dist/js/bootstrap.bundle.min.js"></script>
<script>
// Distributed loads: a sloped band with evenly spaced arrows
var x0 = 362.5, x1 = 1429.5, rise = 94;
function band(top, h, n, head, w) {
  var s = '<path stroke-width="1" d="M' + x0 + ' ' + top + 'L' + x1 + ' ' + (top + rise) + 'v' + h + 'L' + x0 + ' ' + (top + h) + 'z"/>';
  for (var i = 0; i <= n; i++) {
    var x = x0 + (x1 - x0) * i / n, y = top + rise * i / n;
    s += '<path stroke-width="1" d="M' + x + ' ' + y + 'v' + (h - 2) + '"/><path stroke="none" fill="#0e6a66" d="M' + (x - w) + ' ' + (y + h - head - 1) + 'h' + 2 * w + 'l' + -w + ' ' + head + 'z"/>';
  }
  return s;
}
document.getElementById('loads').innerHTML = band(270.500, 24, 39, 7, 2) + band(298.700, 16, 58, 5, 1.500);
</script>
</body>
</html>
